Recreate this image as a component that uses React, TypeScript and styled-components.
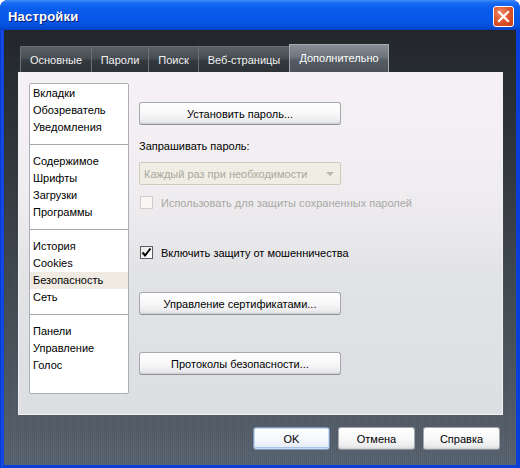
import React from "react";
import styled, { createGlobalStyle, css } from "styled-components";

const Global = createGlobalStyle`
  html, body { margin: 0; padding: 0; background: #ffffff; }
  body { width: 520px; height: 468px; overflow: hidden; font-family: Tahoma, "Liberation Sans", Arial, sans-serif; font-size: 11px; }
  * { box-sizing: border-box; }
`;

const Window = styled.div`
  width: 520px;
  height: 468px;
  display: flex;
  flex-direction: column;
  background: #0a3ed8;
  border-radius: 8px 8px 0 0;
  overflow: hidden;
`;

const TitleBar = styled.div`
  height: 30px;
  flex: 0 0 30px;
  display: flex;
  align-items: center;
  justify-content: space-between;
  padding: 3px 6px 0 8px;
  background: linear-gradient(
    to bottom,
    #3d8ef8 0px,
    #1a6cf2 3px,
    #0a5ded 8px,
    #0857ea 18px,
    #0650dd 26px,
    #0340c4 30px
  );
`;

const Title = styled.span`
  font-family: "Trebuchet MS", "Liberation Sans", Arial, sans-serif;
  font-weight: bold;
  font-size: 13px;
  color: #ffffff;
  text-shadow: 1px 1px 0 #0a1e6e;
  letter-spacing: 0.2px;
`;

const CloseButton = styled.div`
  width: 21px;
  height: 21px;
  border: 1px solid #ffffff;
  border-radius: 3px;
  background: radial-gradient(circle at 35% 30%, #f08a66 0%, #e0582f 45%, #c4390f 100%);
  display: flex;
  align-items: center;
  justify-content: center;
`;

const Frame = styled.div`
  flex: 1;
  display: flex;
  padding: 0 4px 4px 4px;
  background: linear-gradient(to right, #0831c8 0px, #1652ea 2px, #0a3ed8 4px);
`;

const Body = styled.div`
  flex: 1;
  display: flex;
  flex-direction: column;
  padding: 14px 13px 15px 14px;
  background:
    repeating-linear-gradient(90deg, rgba(0, 0, 0, 0.07) 0 1px, rgba(255, 255, 255, 0) 1px 2px),
    linear-gradient(to bottom, #24282c 0%, #30363b 25%, #4a535c 70%, #5b6673 100%);
`;

const TabRow = styled.div`
  display: flex;
  align-items: flex-end;
  height: 28px;
  padding-left: 2px;
`;

const Tab = styled.div<{ $w: number; $active?: boolean }>`
  width: ${(p) => p.$w}px;
  height: 26px;
  display: flex;
  align-items: center;
  justify-content: center;
  color: #f2f2f2;
  border: 1px solid #6a7076;
  border-bottom: none;
  margin-right: -1px;
  background: linear-gradient(to bottom, #5a6066 0%, #474d53 45%, #353a40 55%, #2c3136 100%);
  ${(p) =>
    p.$active &&
    css`
      height: 28px;
      border-color: #a2a9b0;
      background: linear-gradient(to bottom, #868d94 0%, #6d747b 45%, #555c63 55%, #4a5158 100%);
      color: #ffffff;
      padding-bottom: 2px;
    `}
`;

const Panel = styled.div`
  height: 343px;
  display: flex;
  gap: 10px;
  padding: 10px 11px 11px 10px;
  border: 1px solid #f2f0f2;
  background:
    repeating-linear-gradient(90deg, rgba(0, 0, 0, 0.018) 0 1px, rgba(255, 255, 255, 0) 1px 2px),
    linear-gradient(to bottom, #f8f3f6 0%, #f2eff2 35%, #e4e5e8 60%, #dee0e3 100%);
`;

const Sidebar = styled.div`
  width: 100px;
  height: 311px;
  flex: 0 0 100px;
  background: #ffffff;
  border: 1px solid #abafb4;
  border-radius: 2px;
  padding-top: 1px;
  display: flex;
  flex-direction: column;
`;

const SideItem = styled.div<{ $selected?: boolean }>`
  height: 17px;
  line-height: 17px;
  padding-left: 3px;
  color: #000000;
  white-space: nowrap;
  background: ${(p) => (p.$selected ? "#efebe3" : "transparent")};
`;

const SideSeparator = styled.div`
  height: 17px;
  display: flex;
  align-items: center;
  &::after {
    content: "";
    display: block;
    width: 100%;
    height: 1px;
    background: #a4a7ab;
  }
`;

const Content = styled.div`
  display: flex;
  flex-direction: column;
  align-items: flex-start;
  width: 202px;
  padding-top: 19px;
`;

const Button = styled.div<{ $w?: number; $default?: boolean; $mt?: number }>`
  width: ${(p) => p.$w ?? 202}px;
  height: 23px;
  margin-top: ${(p) => p.$mt ?? 0}px;
  display: flex;
  align-items: center;
  justify-content: center;
  color: #000000;
  border: 1px solid #a5a9ae;
  border-bottom-color: #8e9398;
  border-radius: 3px;
  background: linear-gradient(to bottom, #ffffff 0%, #f8f8f9 50%, #ececee 85%, #d8dadd 100%);
  box-shadow: inset 0 -1px 0 #d0d2d6;
  ${(p) =>
    p.$default &&
    css`
      border-color: #7e9ab8;
      box-shadow: inset 0 0 0 1px #c6daf2, inset 0 -2px 0 #a8c3e6;
      background: linear-gradient(to bottom, #ffffff 0%, #f3f6fb 60%, #e2e9f2 100%);
    `}
`;

const FieldLabel = styled.div`
  margin-top: 13px;
  height: 16px;
  line-height: 16px;
  color: #000000;
`;

const Select = styled.div`
  margin-top: 8px;
  width: 202px;
  height: 23px;
  display: flex;
  align-items: center;
  justify-content: space-between;
  padding: 0 3px 0 4px;
  border: 1px solid #cdcabc;
  border-radius: 2px;
  background: #f0eee4;
  color: #a9a89f;
`;

const SelectArrow = styled.div`
  width: 15px;
  height: 17px;
  display: flex;
  align-items: center;
  justify-content: center;
  &::after {
    content: "";
    border-left: 4px solid transparent;
    border-right: 4px solid transparent;
    border-top: 4px solid #b8b7b0;
  }
`;

const CheckRow = styled.div<{ $mt: number; $disabled?: boolean }>`
  margin-top: ${(p) => p.$mt}px;
  display: flex;
  align-items: center;
  gap: 8px;
  padding-left: 1px;
  height: 13px;
  white-space: nowrap;
  color: ${(p) => (p.$disabled ? "#a8a8a4" : "#000000")};
`;

const Box = styled.div<{ $disabled?: boolean }>`
  width: 13px;
  height: 13px;
  flex: 0 0 13px;
  border: 1px solid ${(p) => (p.$disabled ? "#cfd0cc" : "#5b5e61")};
  background: ${(p) => (p.$disabled ? "#f7f6f3" : "linear-gradient(135deg, #e8e8e8, #ffffff)")};
  display: flex;
  align-items: center;
  justify-content: center;
`;

const Footer = styled.div`
  display: flex;
  justify-content: flex-end;
  gap: 8px;
  margin-top: 12px;
  padding-right: 3px;
`;

const sidebarGroups = [
  ["Вкладки", "Обозреватель", "Уведомления"],
  ["Содержимое", "Шрифты", "Загрузки", "Программы"],
  ["История", "Cookies", "Безопасность", "Сеть"],
  ["Панели", "Управление", "Голос"],
];

const tabs: { label: string; w: number; active?: boolean }[] = [
  { label: "Основные", w: 72 },
  { label: "Пароли", w: 58 },
  { label: "Поиск", w: 51 },
  { label: "Веб-страницы", w: 92 },
  { label: "Дополнительно", w: 100, active: true },
];

export default function App() {
  return (
    <>
      <Global />
      <Window>
        <TitleBar>
          <Title>Настройки</Title>
          <CloseButton>
            <svg width="13" height="13" viewBox="0 0 13 13">
              <path d="M2 2 L11 11 M11 2 L2 11" stroke="#ffffff" strokeWidth="2.2" strokeLinecap="square" />
            </svg>
          </CloseButton>
        </TitleBar>
        <Frame>
          <Body>
            <TabRow>
              {tabs.map((t) => (
                <Tab key={t.label} $w={t.w} $active={t.active}>
                  {t.label}
                </Tab>
              ))}
            </TabRow>
            <Panel>
              <Sidebar>
                {sidebarGroups.map((group, gi) => (
                  <React.Fragment key={gi}>
                    {gi > 0 && <SideSeparator />}
                    {group.map((item) => (
                      <SideItem key={item} $selected={item === "Безопасность"}>
                        {item}
                      </SideItem>
                    ))}
                  </React.Fragment>
                ))}
              </Sidebar>
              <Content>
                <Button>Установить пароль...</Button>
                <FieldLabel>Запрашивать пароль:</FieldLabel>
                <Select>
                  <span>Каждый раз при необходимости</span>
                  <SelectArrow />
                </Select>
                <CheckRow $mt={11} $disabled>
                  <Box $disabled />
                  <span>Использовать для защиты сохраненных паролей</span>
                </CheckRow>
                <CheckRow $mt={37}>
                  <Box>
                    <svg width="11" height="11" viewBox="0 0 11 11">
                      <path d="M1.5 5.5 L4 8.5 L9.5 1.5" stroke="#000000" strokeWidth="2" fill="none" />
                    </svg>
                  </Box>
                  <span>Включить защиту от мошенничества</span>
                </CheckRow>
                <Button $mt={33}>Управление сертификатами...</Button>
                <Button $mt={37}>Протоколы безопасности...</Button>
              </Content>
            </Panel>
            <Footer>
              <Button $w={77} $default>
                OK
              </Button>
              <Button $w={77}>Отмена</Button>
              <Button $w={77}>Справка</Button>
            </Footer>
          </Body>
        </Frame>
      </Window>
    </>
  );
}
